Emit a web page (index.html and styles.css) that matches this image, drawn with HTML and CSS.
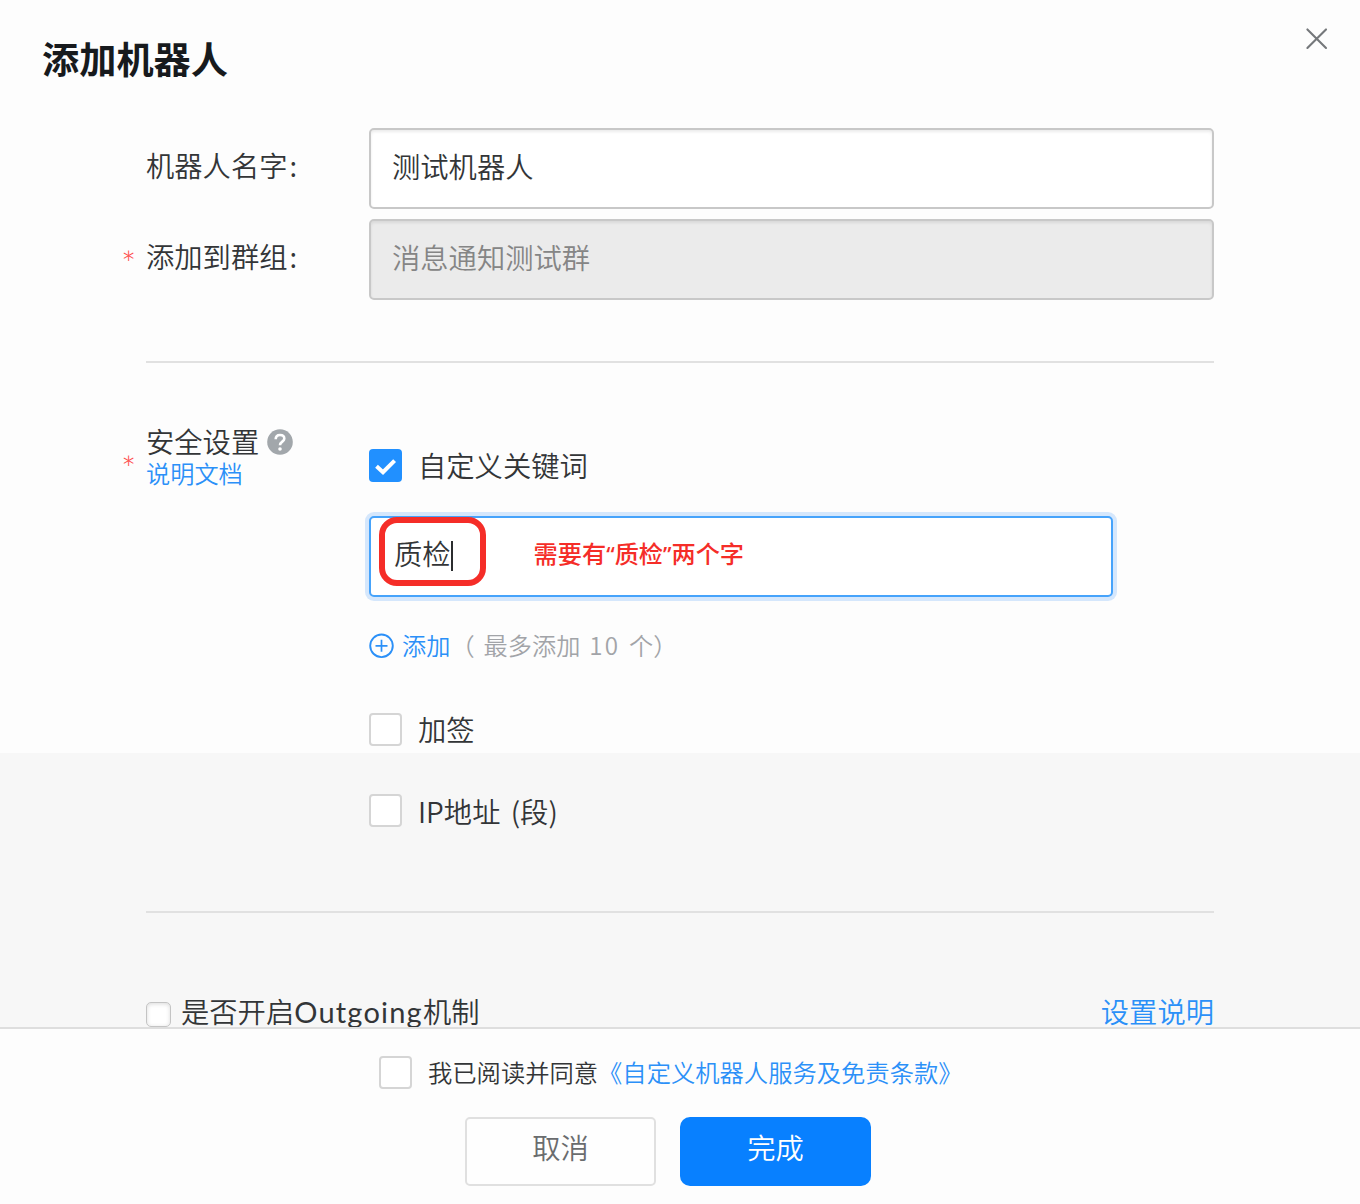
FILE: index.html
```
<!DOCTYPE html>
<html lang="zh-CN">
<head>
    <meta charset="UTF-8">
    <meta name="viewport" content="width=device-width, initial-scale=1.0">
    <title>添加机器人</title>
    <link rel="stylesheet" href="styles.css">
</head>
<body>
    <div class="dialog">
        <div class="content">
            <div class="header">
                <h1 class="title">添加机器人</h1>
                <svg class="close" width="24" height="24" viewBox="0 0 24 24">
                    <path d="M2.4 2.4 L21 21 M21 2.4 L2.4 21" fill="none" stroke="#75787b" stroke-width="2.1" stroke-linecap="round"/>
                </svg>
            </div>

            <div class="form">
                <div class="row">
                    <div class="label">机器人名字<span class="colon">:</span></div>
                    <div class="input">测试机器人</div>
                </div>
                <div class="row">
                    <div class="label"><span class="star">*</span>添加到群组<span class="colon">:</span></div>
                    <div class="input disabled">消息通知测试群</div>
                </div>

                <div class="divider"></div>

                <div class="security">
                    <div class="securityLabel">
                        <span class="star starSecurity">*</span>
                        <div class="securityTitle">
                            <span>安全设置</span>
                            <svg class="help" width="26" height="26" viewBox="0 0 26 26">
                                <circle cx="13" cy="13" r="12.8" fill="#a2a7ab"/>
                                <path d="M8.7 10.3 C8.7 7.6 10.5 6 13 6 C15.6 6 17.3 7.5 17.3 9.7 C17.3 12.6 13 12.7 13 16.2" fill="none" stroke="#fff" stroke-width="2.6"/>
                                <circle cx="13" cy="20" r="1.8" fill="#fff"/>
                            </svg>
                        </div>
                        <a class="link docLink">说明文档</a>
                    </div>
                    <div class="options">
                        <div class="option">
                            <span class="checkbox checked">
                                <svg width="33" height="33" viewBox="0 0 33 33">
                                    <path d="M7.5 17.2 L14 23.2 L25.6 11.6" fill="none" stroke="#fff" stroke-width="4"/>
                                </svg>
                            </span>
                            <span class="optionText">自定义关键词</span>
                        </div>
                        <div class="input focused">
                            <span>质检</span><span class="caret"></span>
                            <span class="mark"></span>
                            <span class="note">需要有<span class="quote">“</span>质检<span class="quote">”</span>两个字</span>
                        </div>
                        <div class="addRow">
                            <svg class="plus" width="26" height="26" viewBox="0 0 26 26">
                                <path d="M12.5 6.8 V18.8 M6.5 12.8 H18.5" stroke="#2b90f8" stroke-width="1.7"/>
                                <circle cx="12.5" cy="12.8" r="11.3" fill="none" stroke="#2b90f8" stroke-width="1.9"/>
                            </svg>
                            <a class="link addLink">添加</a>
                            <span class="hint"><span class="paren">（</span><span class="hintText">最多添加</span><span class="num">10</span><span>个</span><span>）</span></span>
                        </div>
                        <div class="option optionSign">
                            <span class="checkbox"></span>
                            <span class="optionText">加签</span>
                        </div>
                        <div class="option optionIp">
                            <span class="checkbox"></span>
                            <span class="optionText optionTextIp">IP地址 <span class="section">(段)</span></span>
                        </div>
                    </div>
                </div>

                <div class="divider dividerLow"></div>

                <div class="outgoing">
                    <span class="nativeBox"></span>
                    <span>是否开启<span class="latin">Outgoing</span>机制</span>
                    <a class="link outgoingLink">设置说明</a>
                </div>
            </div>
        </div>

        <div class="footer">
            <div class="agree">
                <span class="checkbox"></span>
                <span class="agreeText">我已阅读并同意</span>
                <a class="link terms">《自定义机器人服务及免责条款》</a>
            </div>
            <div class="buttons">
                <button class="button cancel">取消</button>
                <button class="button done">完成</button>
            </div>
        </div>
    </div>
</body>
</html>
```
FILE: styles.css
```
* {
    box-sizing: border-box;
}

body {
    margin: 0;
    font-family: "Noto Sans CJK SC", sans-serif;
    font-weight: 350;
    font-size: 28.3px;
    line-height: 40px;
    color: #333537;
    white-space: nowrap;
}

.dialog {
    height: 1204px;
    display: flex;
    flex-direction: column;
    overflow: hidden;
    background-color: #fdfdfd;
}

.content {
    height: 1027px;
    overflow: hidden;
    background: linear-gradient(#fdfdfd 753px, #f7f7f7 753px);
}

.header {
    height: 128px;
    padding: 27px 31px 0 42px;
    display: flex;
    justify-content: space-between;
    align-items: flex-start;
}

.title {
    margin: 4px 0 0;
    font-size: 37.2px;
    font-weight: 700;
    line-height: 54px;
    color: #171a1d;
}

.form {
    width: 1068px;
    margin-left: 146px;
}

.row {
    display: flex;
    align-items: center;
    margin-bottom: 10px;
}

.label {
    width: 223px;
    position: relative;
    top: -4px;
}

.colon {
    margin-left: 2px;
}

.star {
    position: absolute;
    left: -25px;
    top: 7px;
    font-family: "Lato", sans-serif;
    font-size: 36px;
    font-weight: 300;
    color: #ff4a4a;
}

.input {
    flex: 1;
    height: 81px;
    padding: 0 21px 6px;
    display: flex;
    align-items: center;
    border: 2px solid #c8c8c8;
    border-radius: 5px;
    background-color: #fff;
    box-shadow: inset 0 2px 3px rgba(0, 0, 0, 0.08);
}

.disabled {
    color: #858585;
    background-color: #ebebeb;
}

.divider {
    height: 2px;
    margin-top: 61px;
    background-color: #e1e1e1;
}

.security {
    display: flex;
    height: 548px;
}

.securityLabel {
    width: 223px;
    padding-top: 58px;
    position: relative;
}

.securityTitle {
    display: flex;
    align-items: center;
    gap: 8px;
}

.help {
    margin-top: 1px;
}

.starSecurity {
    top: 85px;
}

.link {
    color: #2b90f8;
}

.docLink {
    display: block;
    font-size: 24.2px;
    line-height: 24px;
}

.options {
    width: 744px;
    padding-top: 86px;
}

.option {
    height: 33px;
    display: flex;
    align-items: center;
    gap: 16px;
    line-height: 33px;
}

.optionText {
    margin-top: -3px;
}

.optionTextIp {
    margin-top: -1px;
}

.checkbox {
    width: 33px;
    height: 33px;
    flex-shrink: 0;
    border: 2px solid #d5d5d5;
    border-radius: 4px;
    background-color: #fff;
}

.checked {
    border: none;
    background-color: #2190ff;
}

.checked svg {
    display: block;
}

.focused {
    position: relative;
    margin-top: 34px;
    padding: 0 21px 7px 23px;
    border-color: #46a3fb;
    box-shadow: 0 0 0 4px #d5e7fc;
}

.caret {
    width: 2px;
    height: 30px;
    margin-top: 5px;
    background-color: #2b2d2f;
}

/* red annotation over the keyword */
.mark {
    position: absolute;
    left: 8px;
    top: -1px;
    width: 107px;
    height: 69px;
    border: 6px solid #f52d28;
    border-radius: 18px;
}

.note {
    margin-left: 81px;
    font-size: 24.2px;
    font-weight: 500;
    color: #f52d28;
}

.quote {
    font-family: "Noto Sans", sans-serif;
    font-size: 22px;
}

.addRow {
    height: 40px;
    margin-top: 28px;
    display: flex;
    align-items: center;
    font-size: 24.2px;
}

.plus {
    margin-top: 2px;
}

.addLink {
    margin-left: 7px;
}

.hint {
    display: flex;
    color: #a2a4a8;
}

.hintText {
    margin-left: 9px;
}

.num {
    margin: 0 9px;
    letter-spacing: 2px;
}

.optionSign {
    margin-top: 48px;
}

.optionIp {
    margin-top: 48px;
}

.section {
    margin-left: 4px;
}

.dividerLow {
    margin-top: 0;
}

.outgoing {
    padding-top: 78px;
    display: flex;
    align-items: flex-start;
}

.nativeBox {
    width: 25px;
    height: 25px;
    margin: 11px 10px 0 0;
    border: 1px solid #c4c4c4;
    border-radius: 5px;
    background-color: #fff;
    box-shadow: inset 0 1px 4px rgba(0, 0, 0, 0.15);
}

.latin {
    font-family: "Lato", sans-serif;
    font-size: 29px;
    font-weight: 400;
    line-height: 1;
    letter-spacing: 1.2px;
}

.outgoingLink {
    margin-left: auto;
}

.footer {
    height: 177px;
    border-top: 2px solid #dedede;
}

.agree {
    height: 33px;
    margin: 27px 0 0 379px;
    display: flex;
    align-items: center;
    font-size: 24.3px;
}

.agreeText {
    margin: -2px 0 0 16px;
}

.terms {
    margin-top: -2px;
}

.buttons {
    display: flex;
    gap: 24px;
    margin: 28px 0 0 465px;
}

.button {
    width: 191px;
    height: 69px;
    padding: 0 0 9px;
    font: inherit;
    border-radius: 5px;
}

.cancel {
    border: 2px solid #e0e0e0;
    background-color: #fefefe;
    color: #6a6c6e;
}

.done {
    border: none;
    border-radius: 10px;
    background-color: #0880ff;
    color: #fff;
}
```
